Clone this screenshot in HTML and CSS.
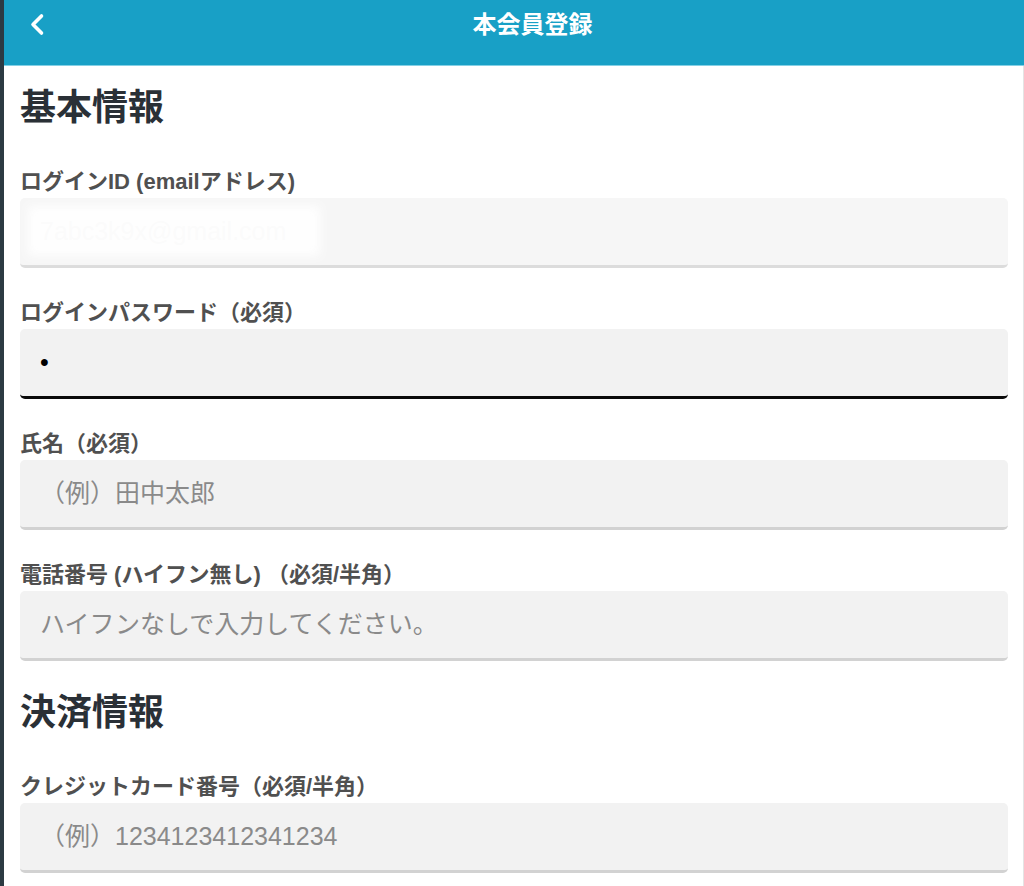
FILE: index.html
```html
<!DOCTYPE html>
<html lang="ja">
<head>
<meta charset="utf-8">
<title>本会員登録</title>
<link rel="stylesheet" href="styles.css">
</head>
<body>
<div class="app">
  <header class="topbar">
    <button class="back" type="button" aria-label="戻る">
      <svg class="back-icon" width="16" height="24" viewBox="0 0 16 24" aria-hidden="true">
        <polyline points="12.5,3 4,11.5 12.5,20" fill="none" stroke="#ffffff" stroke-width="3.6" stroke-linecap="round" stroke-linejoin="round"/>
      </svg>
    </button>
    <h1 class="title">本会員登録</h1>
    <span class="spacer"></span>
  </header>

  <main class="content">
    <h2 class="section-title">基本情報</h2>

    <div class="field">
      <label class="label" for="f-id">ログインID (emailアドレス)</label>
      <div class="control">
        <input class="input input-readonly" id="f-id" type="text" value="7abc3k9x@gmail.com" readonly>
        <span class="mask"></span>
      </div>
    </div>

    <div class="field">
      <label class="label" for="f-pw">ログインパスワード（必須）</label>
      <div class="control">
        <input class="input input-focused" id="f-pw" type="password" value="a">
      </div>
    </div>

    <div class="field">
      <label class="label" for="f-name">氏名（必須）</label>
      <div class="control">
        <input class="input" id="f-name" type="text" placeholder="（例）田中太郎">
      </div>
    </div>

    <div class="field">
      <label class="label" for="f-tel">電話番号 (ハイフン無し) （必須/半角）</label>
      <div class="control">
        <input class="input" id="f-tel" type="text" placeholder="ハイフンなしで入力してください。">
      </div>
    </div>

    <h2 class="section-title">決済情報</h2>

    <div class="field">
      <label class="label" for="f-card">クレジットカード番号（必須/半角）</label>
      <div class="control">
        <input class="input" id="f-card" type="text" placeholder="（例）1234123412341234">
      </div>
    </div>
  </main>
</div>
</body>
</html>
```

FILE: styles.css
```css
* {
  box-sizing: border-box;
}

html, body {
  margin: 0;
  padding: 0;
  background: #ffffff;
}

body {
  font-family: "Liberation Sans", "Noto Sans CJK JP", sans-serif;
  width: 1024px;
  height: 886px;
  overflow: hidden;
}

.app {
  display: flex;
  flex-direction: column;
  height: 886px;
  border-left: 4px solid #2c3a42;
}

.topbar {
  display: flex;
  align-items: center;
  height: 66px;
  padding-bottom: 15px;
  background: #18a0c6;
  border-bottom: 1px solid #84d0e5;
  flex-shrink: 0;
}

.back {
  width: 60px;
  height: 40px;
  padding: 0 0 0 25px;
  margin: 0;
  border: none;
  background: transparent;
  display: flex;
  align-items: center;
  cursor: pointer;
}

.back-icon {
  display: block;
}

.title {
  flex: 1;
  margin: 0;
  text-align: center;
  color: #ffffff;
  font-size: 24px;
  font-weight: 700;
  line-height: 30px;
}

.spacer {
  width: 23px;
}

.content {
  flex: 1;
  padding: 21px 15px 0 16px;
  border-right: 1px solid #e4e4e4;
}

.section-title {
  margin: 0 0 39px;
  font-size: 36px;
  font-weight: 700;
  line-height: 42px;
  color: #2a3036;
}

.field {
  margin-bottom: 31px;
}

.label {
  display: block;
  margin-bottom: 3px;
  font-size: 22px;
  font-weight: 700;
  line-height: 27px;
  color: #505050;
}

.control {
  position: relative;
}

.input {
  display: block;
  width: 100%;
  height: 70px;
  margin: 0;
  padding: 0 20px;
  border: none;
  border-bottom: 3px solid #d2d2d2;
  border-radius: 5px;
  background: #f2f2f2;
  font-family: "Liberation Sans", "Noto Sans CJK JP", sans-serif;
  font-size: 25px;
  color: #333333;
  outline: none;
}

.input::placeholder {
  color: #8a8a8a;
  opacity: 1;
}

.input-readonly {
  background: #f6f6f6;
  border-bottom-color: #dcdcdc;
  color: #c8c8c8;
}

.input-focused {
  border-bottom-color: #0a0a0a;
  color: #000000;
}

.mask {
  position: absolute;
  left: 8px;
  top: 8px;
  width: 292px;
  height: 50px;
  background: #ffffff;
  opacity: 0.93;
  filter: blur(5px);
  pointer-events: none;
}
```
